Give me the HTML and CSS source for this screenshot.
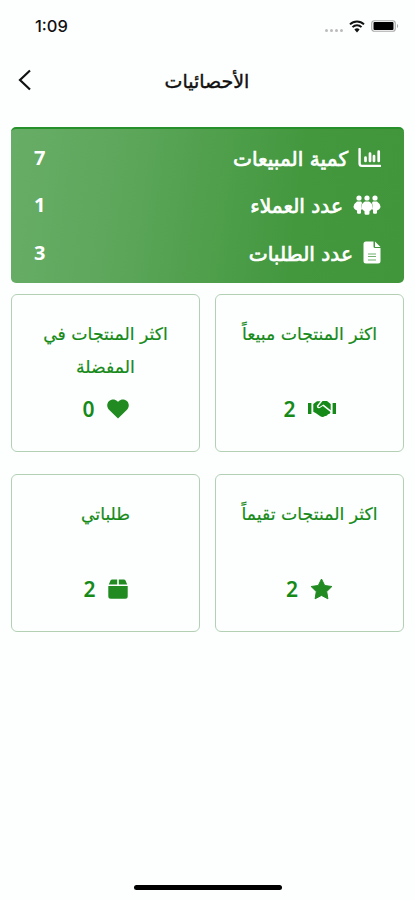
FILE: index.html
```html
<!DOCTYPE html>
<html lang="ar" dir="rtl">
<head>
    <meta charset="UTF-8">
    <meta name="viewport" content="width=device-width, initial-scale=1.0">
    <title>الأحصائيات</title>
    <link rel="stylesheet" href="styles.css">
</head>
<body>
    <div class="screen">
        <!-- Status bar -->
        <div class="status-bar" dir="ltr">
            <span class="time">1:09</span>
            <div class="status-icons">
                <div class="signal"><i></i><i></i><i></i><i></i></div>
                <svg class="wifi" width="16" height="13" viewBox="0 0 16 13">
                    <path d="M1 4.4a10 10 0 0 1 14 0M3.5 7.1a6.4 6.4 0 0 1 9 0" fill="none" stroke="#111" stroke-width="2"/>
                    <path d="M5.4 9.6a3.7 3.7 0 0 1 5.2 0L8 12.4z" fill="#111"/>
                </svg>
                <svg class="battery" width="28" height="12" viewBox="0 0 28 12">
                    <rect x=".75" y=".75" width="23.5" height="10.5" rx="2.5" fill="none" stroke="#aaa" stroke-width="1.2"/>
                    <rect x="2.5" y="2" width="20" height="8" rx="1" fill="#000"/>
                    <path d="M26 4v4c1.5-.6 1.5-3.4 0-4z" fill="#aaa"/>
                </svg>
            </div>
        </div>

        <!-- Header -->
        <header class="header" dir="ltr">
            <svg class="back" width="14" height="22" viewBox="0 0 14 22">
                <path d="M12 1.5L2 11l10 9.5" fill="none" stroke="#111" stroke-width="2.2"/>
            </svg>
            <h1 dir="rtl">الأحصائيات</h1>
        </header>

        <!-- Summary -->
        <section class="summary">
            <div class="summary-row">
                <svg width="23" height="20" viewBox="0 0 23 20">
                    <path d="M1.6 1v14.5q0 2.4 2.4 2.4h18" fill="none" stroke="#fff" stroke-width="2.4" stroke-linecap="round"/>
                    <path d="M7.5 9.5V13M12 5.5V13M16 8V13M20.7 3.5V13" stroke="#fff" stroke-width="2.7" stroke-linecap="round"/>
                </svg>
                <span class="label">كمية المبيعات</span>
                <span class="value">7</span>
            </div>
            <div class="summary-row">
                <svg width="28" height="20" viewBox="0 0 28 20" fill="#fff">
                    <circle cx="6" cy="3" r="2.6"/>
                    <circle cx="14" cy="3" r="2.6"/>
                    <circle cx="22" cy="3" r="2.6"/>
                    <path d="M4 6.5h4l1 1.2Q7.5 11 9 14l-1 1v2.5q0 1.2-1.2 1.2H5.2Q4 18.7 4 17.5v-2Q.5 14 .5 11.5T4 6.5z"/>
                    <path d="M24 6.5h-4l-1 1.2q1.5 3.3 0 6.3l1 1v2.5q0 1.2 1.2 1.2h1.6q1.2 0 1.2-1.2v-2q3.5-1.5 3.5-4T24 6.5z"/>
                    <path d="M12 6.5h4q3.5 2 3.5 5t-3 4.5v2.3q0 1.5-1.5 1.5h-2q-1.5 0-1.5-1.5V16q-3-1.5-3-4.5t3.5-5z"/>
                </svg>
                <span class="label">عدد العملاء</span>
                <span class="value">1</span>
            </div>
            <div class="summary-row">
                <svg width="18" height="23" viewBox="0 0 18 23">
                    <path d="M3 .5h7.5v5Q10.5 7 12 7h5.500v13q0 2.500-2.500 2.500H3Q.5 22.500.5 20V3Q.5.5 3 .5zM12 .5L17.500 6H12z" fill="#fff"/>
                    <path d="M5 13h8M5 15.500h8M5 19h8" stroke="#43983e" stroke-width="1.2" opacity=".75"/>
                </svg>
                <span class="label">عدد الطلبات</span>
                <span class="value">3</span>
            </div>
        </section>

        <!-- Cards -->
        <section class="cards">
            <div class="card">
                <h2>اكثر المنتجات مبيعاً</h2>
                <div class="count">
                    <svg width="28" height="18" viewBox="0 0 28 18" fill="#168a19">
                        <path d="M0 3h3.4v11H0zM24.6 3H28v11h-3.4z"/>
                        <path d="M5.3 4L9 1.2h3.500L8.8 5.8q-.3 3.2 3 2.200l3-2 7.700 6q-.5 2.300-2.500 2.200-1 2.200-3 1.700-2.300 1.800-4.700.3L8 13.300l-2.700-1.500z"/>
                        <path d="M14.500 1H19l3.700 3v6.200l-7.200-5.600-4 2.400q-1.500.2-1-1z"/>
                    </svg>
                    <span>2</span>
                </div>
            </div>
            <div class="card">
                <h2>اكثر المنتجات في المفضلة</h2>
                <div class="count">
                    <svg width="22" height="20" viewBox="0 0 22 20" fill="#218b22">
                        <path d="M11 19.500L2 10.800C-.4 8.300-.3 4.300 1.900 2.200 4.400-.1 8-.1 10.200 2.100l.8.900.8-.9c2.200-2.200 5.900-2.200 8.300.1 2.200 2.100 2.300 6.100-.1 8.600z"/>
                    </svg>
                    <span>0</span>
                </div>
            </div>
            <div class="card">
                <h2>اكثر المنتجات تقيماً</h2>
                <div class="count">
                    <svg width="23" height="23" viewBox="0 0 23 23" fill="#218b22" stroke="#218b22" stroke-linejoin="round">
                        <path d="M11.500 1l3.200 6.500 7.200 1-5.200 5.100 1.200 7.200-6.400-3.400-6.400 3.400 1.200-7.200L1.100 8.500l7.200-1z"/>
                    </svg>
                    <span>2</span>
                </div>
            </div>
            <div class="card">
                <h2>طلباتي</h2>
                <div class="count">
                    <svg width="20" height="20" viewBox="0 0 20 20" fill="#218b22">
                        <path d="M4.200.5h5v5H.8l1.700-3.900Q3 .5 4.200.5zM10.800.5h5q1.200 0 1.700 1.100l1.700 3.900h-8.400zM.3 7h19.400v10.200q0 2.500-2.500 2.500H2.800q-2.500 0-2.500-2.500z"/>
                    </svg>
                    <span>2</span>
                </div>
            </div>
        </section>

        <div class="home-indicator"></div>
    </div>
</body>
</html>
```
FILE: styles.css
```css
* {
    box-sizing: border-box;
}

body {
    margin: 0;
    background-color: #fdfffe;
    color: #111111;
    font-family: "DejaVu Sans", sans-serif;
}

.screen {
    height: 900px;
    display: flex;
    flex-direction: column;
    overflow: hidden;
}

.status-bar {
    height: 52px;
    display: flex;
    align-items: center;
    justify-content: space-between;
    padding: 0 16px 0 35px;
}

.time {
    font: 500 16.5px/20px Inter, sans-serif;
}

.status-icons {
    display: flex;
    align-items: center;
}

.signal {
    display: flex;
    gap: 2px;
    margin: 8px 6px 0 0;
}

.signal i {
    width: 3px;
    height: 3px;
    border-radius: 50%;
    background-color: #bbbbbb;
}

.wifi {
    margin-right: 6px;
}

.header {
    height: 56px;
    display: flex;
    align-items: center;
    padding: 0 18px;
}

.header h1 {
    flex: 1;
    margin: 2px 15px 0 0;
    text-align: center;
    font-size: 19px;
    line-height: 28px;
    font-weight: normal;
    -webkit-text-stroke: 0.4px;
}

.summary {
    height: 156px;
    margin: 19px 11px 0;
    padding: 5px 23px 6px;
    border-top: 2px solid #26902a;
    border-radius: 5px;
    background: linear-gradient(97deg, #68ad67 0%, #5ca65a 30%, #43983e 72%, #41963c 100%);
    color: #ffffff;
}

.summary-row {
    height: 47.5px;
    display: flex;
    align-items: center;
    gap: 10px;
}

.summary-row .label {
    padding-top: 2px;
    font-size: 20.2px;
    line-height: 28px;
    -webkit-text-stroke: 0.7px;
}

.summary-row .value {
    margin-right: auto;
    font: bold 20px/28px "Noto Sans", sans-serif;
}

.cards {
    display: grid;
    grid-template-columns: 1fr 1fr;
    gap: 22px 15px;
    margin: 11px 11px 0;
}

.card {
    height: 158px;
    display: flex;
    flex-direction: column;
    align-items: center;
    justify-content: space-between;
    padding: 23px 20px 28px;
    border: 1px solid #b3d0b4;
    border-radius: 6px;
    color: #168a19;
}

.card h2 {
    margin: 0;
    font-size: 17.3px;
    line-height: 33px;
    font-weight: normal;
    text-align: center;
    -webkit-text-stroke: 0.2px;
}

.count {
    height: 28px;
    display: flex;
    align-items: center;
    gap: 12px;
    font: 600 21px/28px "Noto Sans", sans-serif;
}

.home-indicator {
    width: 148px;
    height: 5px;
    margin: auto auto 10px;
    border-radius: 3px;
    background-color: #000000;
}
```
